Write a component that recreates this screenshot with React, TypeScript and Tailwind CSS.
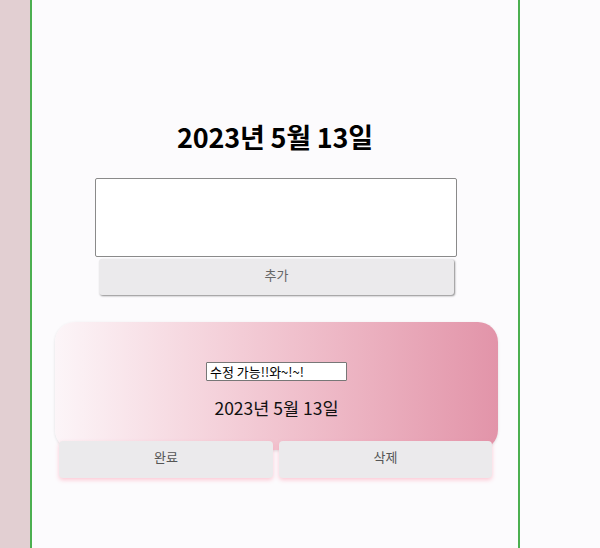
export default function App() {
    return (
        <div className="flex min-h-[548px] bg-[#fcfbfd] font-['Noto_Sans_CJK_KR',sans-serif]">
            <div className="w-[30px] shrink-0 bg-[#e2cfd2]" />
            <div className="w-[490px] shrink-0 border-x-2 border-[#4caf50] flex flex-col items-start">
                <h1 className="w-full mt-[117px] text-center text-[27px] leading-[40px] font-bold tracking-[-0.2px] text-black">
                    2023년 5월 13일
                </h1>
                <textarea className="ml-[63px] mt-[21px] w-[362px] h-[79px] bg-white border border-[#8a8a8a] rounded-[2px] resize-none outline-none" />
                <button className="ml-[67px] mt-[2px] w-[355px] h-[36px] pb-[5px] bg-[#ebeaec] rounded-[3px] text-[13px] text-[#666] shadow-[1px_1px_2px_rgba(0,0,0,0.45)]">
                    추가
                </button>
                <div className="ml-[23px] mt-[27px] w-[443px] h-[128px] rounded-[20px] bg-linear-to-r from-[#fcf5f8] to-[#e294a9] shadow-[0_1px_3px_rgba(0,0,0,0.12)] flex flex-col items-center pt-[40px]">
                    <input
                        defaultValue="수정 가능!!와~!~!"
                        className="w-[141px] h-[19px] bg-white border border-[#777] rounded-[1px] px-[3px] text-[13px] leading-none text-black outline-none"
                    />
                    <p className="mt-[14px] text-[17.5px] leading-[26px] text-[#111]">2023년 5월 13일</p>
                </div>
                <div className="ml-[27px] -mt-[9px] relative flex gap-[6px]">
                    <button className="w-[214px] h-[37px] pb-[6px] bg-[#ebeaec] rounded-[4px] text-[13px] text-[#555] shadow-[0_2px_4px_rgba(255,140,165,0.45)]">
                        완료
                    </button>
                    <button className="w-[213px] h-[37px] pb-[6px] bg-[#ebeaec] rounded-[4px] text-[13px] text-[#555] shadow-[0_2px_4px_rgba(255,140,165,0.45)]">
                        삭제
                    </button>
                </div>
            </div>
            <div className="flex-1" />
        </div>
    );
}
